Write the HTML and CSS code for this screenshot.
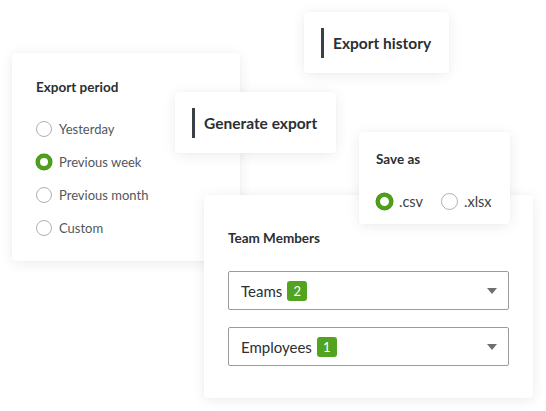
FILE: index.html
```
<!DOCTYPE html>
<html>
<head>
<meta charset="utf-8">
<link rel="stylesheet" href="styles.css">
</head>
<body>
<div class="canvas">
  <section class="card period">
    <h3 class="title">Export period</h3>
    <ul class="radios">
      <li class="radio-row"><span class="radio"></span><span class="label">Yesterday</span></li>
      <li class="radio-row"><span class="radio on"></span><span class="label">Previous week</span></li>
      <li class="radio-row"><span class="radio"></span><span class="label">Previous month</span></li>
      <li class="radio-row"><span class="radio"></span><span class="label">Custom</span></li>
    </ul>
  </section>

  <section class="card tab history"><span class="tab-text">Export history</span></section>
  <section class="card tab generate"><span class="tab-text">Generate export</span></section>

  <section class="card members">
    <h3 class="title">Team Members</h3>
    <div class="select"><span class="sel-text">Teams</span><span class="badge">2</span><span class="caret"></span></div>
    <div class="select"><span class="sel-text">Employees</span><span class="badge">1</span><span class="caret"></span></div>
  </section>

  <section class="card saveas">
    <h3 class="title">Save as</h3>
    <div class="inline-radios">
      <span class="radio-row"><span class="radio on"></span><span class="label">.csv</span></span>
      <span class="radio-row"><span class="radio"></span><span class="label">.xlsx</span></span>
    </div>
  </section>
</div>
</body>
</html>
```
FILE: styles.css
```
* { box-sizing: border-box; }
html, body { margin: 0; padding: 0; background: #fff; }
body { font-family: "Lato", "Open Sans", sans-serif; color: #2b2f33; }
.canvas { position: relative; width: 546px; height: 411px; overflow: hidden; }

.card {
  position: absolute;
  background: #fff;
  border-radius: 4px;
  box-shadow: 0 2px 14px rgba(0,0,0,0.08), 0 0 2px rgba(0,0,0,0.03);
}
.title { margin: 0; font-size: 13.5px; font-weight: 700; color: #2b2f33; line-height: 18px; }

.period { left: 12px; top: 53px; width: 228px; height: 208px; padding: 25px 0 0 24px; z-index: 1; }
.radios { list-style: none; margin: 25px 0 0; padding: 0; display: flex; flex-direction: column; gap: 17px; }
.radio-row { display: flex; align-items: center; height: 16px; }
.radio {
  width: 16px; height: 16px; border-radius: 50%;
  border: 1px solid #b0b0b0; background: #fff; flex: none;
}
.radio.on { border: 4px solid #4f9f1c; box-shadow: 0 0 0 0.5px #3f8a12; }
.label { margin-left: 7px; font-size: 13px; color: #52575c; }

.tab { display: flex; align-items: center; }
.tab-text {
  font-size: 15.5px; font-weight: 700; color: #2b2f33;
  border-left: 3px solid #3b4046; padding-left: 9px; line-height: 30px;
}
.history { left: 304px; top: 12px; width: 145px; height: 61px; padding-left: 17px; z-index: 2; }
.generate { left: 175px; top: 92px; width: 161px; height: 61px; padding-left: 17px; z-index: 2; }

.members { left: 204px; top: 195px; width: 329px; height: 203px; padding: 34px 24px 0 24px; z-index: 3; }
.members .title { margin-bottom: 24px; }
.select {
  display: flex; align-items: center; height: 39px; margin-bottom: 17px;
  border: 1px solid #9b9b9b; border-radius: 2px; padding: 0 11px 0 12px;
}
.sel-text { font-size: 15px; color: #2b2f33; }
.badge {
  margin-left: 5px; width: 20px; height: 20px; border-radius: 3px;
  background: #52a31f; color: #fff; font-size: 13px;
  display: flex; align-items: center; justify-content: center;
}
.caret {
  margin-left: auto; width: 0; height: 0;
  border-left: 5px solid transparent; border-right: 5px solid transparent;
  border-top: 6px solid #6b6f73;
}

.saveas { left: 359px; top: 132px; width: 151px; height: 92px; padding: 18px 0 0 17px; z-index: 4; }
.inline-radios { display: flex; gap: 18px; margin-top: 25px; }
.saveas .label { font-size: 14.5px; margin-left: 6px; color: #3d4146; }
.saveas .radio { width: 17px; height: 17px; }
```
